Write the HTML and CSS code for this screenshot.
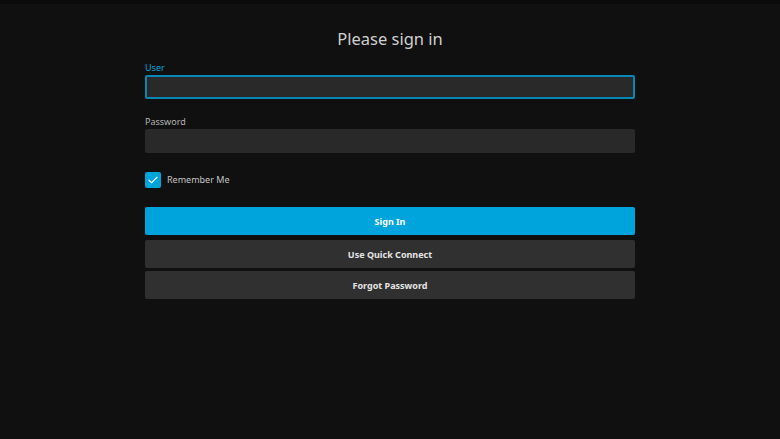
FILE: index.html
```html
<!DOCTYPE html>
<html>
<head>
<meta charset="utf-8">
<link rel="stylesheet" href="styles.css">
</head>
<body>
<div class="topbar"></div>
<main class="page">
  <form class="login">
    <h1 class="title">Please sign in</h1>
    <div class="field field-first">
      <label class="label label-active">User</label>
      <div class="input input-focus"></div>
    </div>
    <div class="field">
      <label class="label">Password</label>
      <div class="input"></div>
    </div>
    <div class="check-row">
      <span class="checkbox">
        <svg width="12" height="12" viewBox="0 0 24 24"><path d="M4 12.5l5 5L20 6.5" fill="none" stroke="#fff" stroke-width="2.2" stroke-linecap="round" stroke-linejoin="round"/></svg>
      </span>
      <span class="check-label">Remember Me</span>
    </div>
    <div class="buttons">
      <div class="btn btn-primary">Sign In</div>
      <div class="btn btn-secondary btn-qc">Use Quick Connect</div>
      <div class="btn btn-secondary btn-fp">Forgot Password</div>
    </div>
  </form>
</main>
</body>
</html>
```
FILE: styles.css
```css
html, body {
  margin: 0;
  padding: 0;
  background: #101010;
  font-family: "Noto Sans", "Open Sans", sans-serif;
  height: 100%;
}
.topbar {
  height: 4px;
  background: #0a0a0a;
}
.page {
  display: flex;
  justify-content: center;
}
.login {
  width: 490px;
  display: flex;
  flex-direction: column;
}
.title {
  margin: 23px 0 0;
  font-size: 16.5px;
  font-weight: 400;
  color: #cfcfcf;
  text-align: center;
  line-height: 24px;
}
.field {
  display: flex;
  flex-direction: column;
  margin-top: 16px;
}
.field-first {
  margin-top: 10px;
}
.label {
  font-size: 9px;
  color: #b4b4b4;
  line-height: 14px;
  height: 14px;
}
.label-active {
  color: #00a4dc;
}
.input {
  height: 24px;
  box-sizing: border-box;
  background: #292929;
  border-radius: 2px;
}
.input-focus {
  border: 2px solid #0887b4;
}
.check-row {
  display: flex;
  align-items: center;
  margin-top: 18px;
  height: 17px;
}
.checkbox {
  width: 16px;
  height: 16px;
  background: #00a4dc;
  border-radius: 2px;
  display: flex;
  align-items: center;
  justify-content: center;
}
.check-label {
  margin-left: 6px;
  font-size: 9px;
  color: #c4c4c4;
}
.buttons {
  margin-top: 19px;
  display: flex;
  flex-direction: column;
}
.btn {
  height: 28px;
  border-radius: 2px;
  display: flex;
  align-items: center;
  justify-content: center;
  font-size: 9px;
  font-weight: 700;
  color: #e4e4e4;
}
.btn-primary {
  background: #00a4dc;
  color: #fff;
}
.btn-secondary {
  background: #303030;
}
.btn-qc {
  margin-top: 5px;
}
.btn-fp {
  margin-top: 3px;
}
```
